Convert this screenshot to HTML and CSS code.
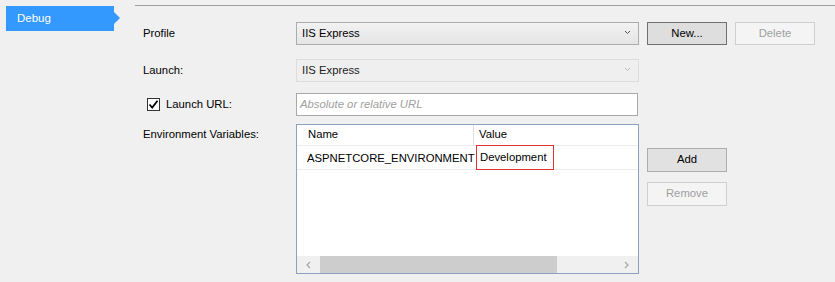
FILE: index.html
```html
<!DOCTYPE html>
<html>
<head>
<meta charset="utf-8">
<link rel="stylesheet" href="styles.css">
</head>
<body>
<div class="page">
  <nav class="side">
    <div class="tab">Debug</div>
  </nav>
  <main class="content">
    <div class="row r1">
      <div class="label">Profile</div>
      <div class="combo"><span>IIS Express</span><svg class="chev" width="7" height="5" viewBox="0 0 7 5"><path d="M1 1 L3.5 3.5 L6 1" fill="none" stroke="#555" stroke-width="1"/></svg></div>
      <button class="btn primary">New...</button>
      <button class="btn disabled">Delete</button>
    </div>
    <div class="row r2">
      <div class="label">Launch:</div>
      <div class="combo dis"><span>IIS Express</span><svg class="chev" width="7" height="5" viewBox="0 0 7 5"><path d="M1 1 L3.5 3.5 L6 1" fill="none" stroke="#bbb" stroke-width="1"/></svg></div>
    </div>
    <div class="row r3">
      <div class="label chk"><span class="box"><svg width="11" height="11" viewBox="0 0 11 11"><path d="M1.5 5.5 L4.2 8.5 L9.5 1.8" fill="none" stroke="#000" stroke-width="1.8"/></svg></span>Launch URL:</div>
      <div class="input"><span class="ph">Absolute or relative URL</span></div>
    </div>
    <div class="row r4">
      <div class="label top">Environment Variables:</div>
      <div class="grid">
        <div class="ghead">
          <div class="c1">Name</div>
          <div class="c2">Value</div>
        </div>
        <div class="grow">
          <div class="c1">ASPNETCORE_ENVIRONMENT</div>
          <div class="c2"><span class="edit">Development</span></div>
        </div>
        <div class="gfill"></div>
        <div class="hscroll">
          <div class="arr"><svg width="5" height="8" viewBox="0 0 5 8"><path d="M4 1 L1 4 L4 7" fill="none" stroke="#a6a6a6" stroke-width="1.2"/></svg></div>
          <div class="thumb"></div>
          <div class="track"></div>
          <div class="arr"><svg width="5" height="8" viewBox="0 0 5 8"><path d="M1 1 L4 4 L1 7" fill="none" stroke="#a6a6a6" stroke-width="1.2"/></svg></div>
        </div>
      </div>
      <div class="gbtns">
        <button class="btn">Add</button>
        <button class="btn disabled">Remove</button>
      </div>
    </div>
  </main>
</div>
</body>
</html>
```

FILE: styles.css
```css
* { box-sizing: border-box; }
html, body { margin: 0; padding: 0; }
body {
  background: #f0f0f0;
  font-family: "Liberation Sans", Arial, sans-serif;
  font-size: 11.3px;
  color: #000;
  width: 835px;
  height: 282px;
  overflow: hidden;
}
.page { display: flex; height: 282px; }
.side { width: 135px; padding: 6px 0 0 6px; flex: none; }
.tab {
  position: relative;
  width: 108px;
  height: 25px;
  background: #3399ff;
  color: #fff;
  font-size: 11.5px;
  line-height: 24px;
  padding-left: 11px;
}
.tab::after {
  content: "";
  position: absolute;
  right: -6px;
  top: 6px;
  border-left: 6px solid #3399ff;
  border-top: 6px solid transparent;
  border-bottom: 6px solid transparent;
}
.content {
  flex: 1;
  margin-top: 5px;
  border-top: 1px solid #a0a0a0;
  padding: 16px 0 0 8px;
}
.row { display: flex; align-items: center; }
.r1 .label, .r2 .label, .r3 .label { padding-bottom: 2px; }
.r2 { margin-top: 14px; }
.r3 { margin-top: 11px; }
.r4 { margin-top: 8px; align-items: flex-start; }
.label { width: 153px; flex: none; }
.label.top { padding-top: 4px; }
.chk { display: flex; align-items: center; padding-left: 4px; }
.box {
  width: 13px; height: 13px;
  border: 1px solid #333;
  background: #fff;
  margin-right: 6px;
  margin-top: 2px;
  display: flex; align-items: center; justify-content: center;
}
.combo {
  width: 343px;
  height: 23px;
  border: 1px solid #acacac;
  background: linear-gradient(#f2f2f2, #e5e5e5);
  display: flex;
  align-items: center;
  padding-left: 5px;
  padding-right: 7px;
  padding-bottom: 2px;
}
.combo span { flex: 1; }
.combo.dis { background: #efefef; border-color: #dcdcdc; }
.combo.dis span { color: #222; }
.btn {
  font-family: inherit;
  font-size: 11.3px;
  width: 80px;
  height: 23px;
  margin-left: 8px;
  border: 1px solid #adadad;
  background: #e1e1e1;
  color: #000;
  padding: 0 0 2px 0;
}
.btn.primary { border-color: #707070; background: #dedede; }
.btn.disabled { border-color: #cfcfcf; background: #f4f4f4; color: #a0a0a0; }
.input {
  width: 342px;
  height: 23px;
  border: 1px solid #a9a9a9;
  background: #fff;
  display: flex;
  align-items: center;
  padding-left: 3px;
  padding-bottom: 2px;
}
.ph { color: #a0a0a0; font-style: italic; }
.grid {
  width: 343px;
  height: 150px;
  border: 1px solid #8aa2bd;
  background: #fff;
  display: flex;
  flex-direction: column;
}
.ghead, .grow { display: flex; flex: none; }
.ghead { height: 21px; border-bottom: 1px solid #ececec; align-items: center; }
.grow { height: 24px; border-bottom: 1px solid #ececec; align-items: center; }
.c1 { width: 177px; flex: none; padding-left: 10px; }
.ghead .c1 { padding-left: 11px; border-right: 1px solid #e0e0e0; height: 21px; line-height: 19px; }
.ghead .c2 { padding-left: 5px; padding-bottom: 2px; }
.grow .c1 { width: 179px; }
.c2 { flex: 1; }
.edit {
  display: inline-block;
  border: 1px solid #d33;
  height: 25px;
  line-height: 22px;
  padding: 0 6px 0 3px;
  margin-top: 0;
}
.gfill { flex: 1; }
.hscroll { height: 17px; display: flex; flex: none; background: #f0f0f0; }
.arr { width: 23px; display: flex; align-items: center; justify-content: center; }
.thumb { width: 237px; background: #cdcdcd; }
.track { flex: 1; }
.gbtns { display: flex; flex-direction: column; margin-top: 24px; gap: 10px; }
.gbtns .btn { height: 24px; }
```
